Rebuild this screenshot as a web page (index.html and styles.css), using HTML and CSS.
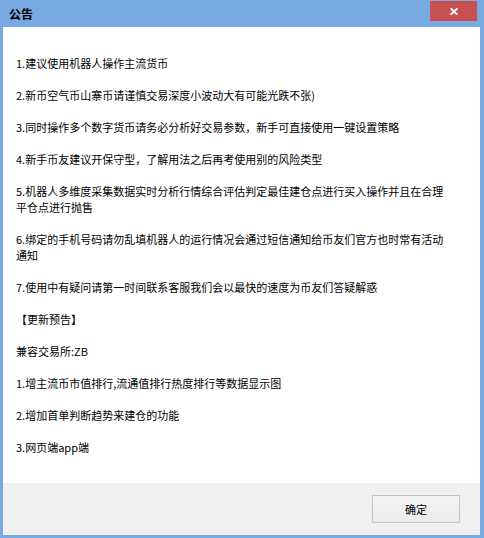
FILE: index.html
```html
<!DOCTYPE html>
<html lang="zh-CN">
<head>
<meta charset="utf-8">
<title>公告</title>
<link rel="stylesheet" href="styles.css">
</head>
<body>
<div class="window">
  <div class="titlebar">
    <span class="title">公告</span>
    <button class="close" aria-label="关闭">
      <svg width="8" height="7" viewBox="0 0 8 7"><path d="M0.6 0.3 L7.4 6.7 M7.4 0.3 L0.6 6.7" stroke="#fff" stroke-width="1.9" fill="none"/></svg>
    </button>
  </div>
  <div class="content">
    <p>1.建议使用机器人操作主流货币</p>
    <p>2.新币空气币山寨币请谨慎交易深度小波动大有可能光跌不张)</p>
    <p>3.同时操作多个数字货币请务必分析好交易参数，新手可直接使用一键设置策略</p>
    <p>4.新手币友建议开保守型，了解用法之后再考使用别的风险类型</p>
    <p>5.机器人多维度采集数据实时分析行情综合评估判定最佳建仓点进行买入操作并且在合理平仓点进行抛售</p>
    <p>6.绑定的手机号码请勿乱填机器人的运行情况会通过短信通知给币友们官方也时常有活动通知</p>
    <p>7.使用中有疑问请第一时间联系客服我们会以最快的速度为币友们答疑解惑</p>
    <p>【更新预告】</p>
    <p>兼容交易所:ZB</p>
    <p>1.增主流币市值排行,流通值排行热度排行等数据显示图</p>
    <p>2.增加首单判断趋势来建仓的功能</p>
    <p>3.网页端app端</p>
  </div>
  <div class="footer">
    <button class="ok">确定</button>
  </div>
</div>
</body>
</html>
```
FILE: styles.css
```css
html, body {
  margin: 0;
  padding: 0;
}
body {
  width: 484px;
  height: 538px;
  overflow: hidden;
  font-family: "Noto Sans CJK SC", "Noto Sans", sans-serif;
  font-size: 11px;
  color: #000;
}
.window {
  width: 484px;
  height: 538px;
  box-sizing: border-box;
  background: #79a9e3;
  display: flex;
  flex-direction: column;
  padding-bottom: 3px;
}
.titlebar {
  height: 27px;
  flex: none;
  display: flex;
  align-items: flex-start;
  padding-left: 9px;
  box-sizing: border-box;
}
.title {
  font-weight: bold;
  font-size: 12px;
  line-height: 16px;
  margin-top: 6px;
}
.close {
  margin-left: auto;
  margin-top: 1px;
  margin-right: 7px;
  width: 47px;
  height: 20px;
  border: none;
  padding: 0;
  background: #c75050;
  display: flex;
  align-items: center;
  justify-content: center;
}
.content {
  flex: 1;
  background: #fff;
  margin: 0 4px 0 3px;
  padding: 28px 32px 0 13px;
  line-height: 16px;
}
.content p {
  margin: 0 0 16px 0;
}
.footer {
  height: 52px;
  flex: none;
  background: #f0f0f0;
  margin: 0 4px 0 3px;
  display: flex;
  align-items: center;
  justify-content: flex-end;
  padding-right: 20px;
}
.ok {
  width: 88px;
  height: 28px;
  border: 1px solid #c3c3c3;
  background: linear-gradient(#f4f4f4, #ececec);
  font-family: "Noto Sans CJK SC", "Noto Sans", sans-serif;
  font-size: 11px;
  color: #000;
  padding: 0;
}
```
